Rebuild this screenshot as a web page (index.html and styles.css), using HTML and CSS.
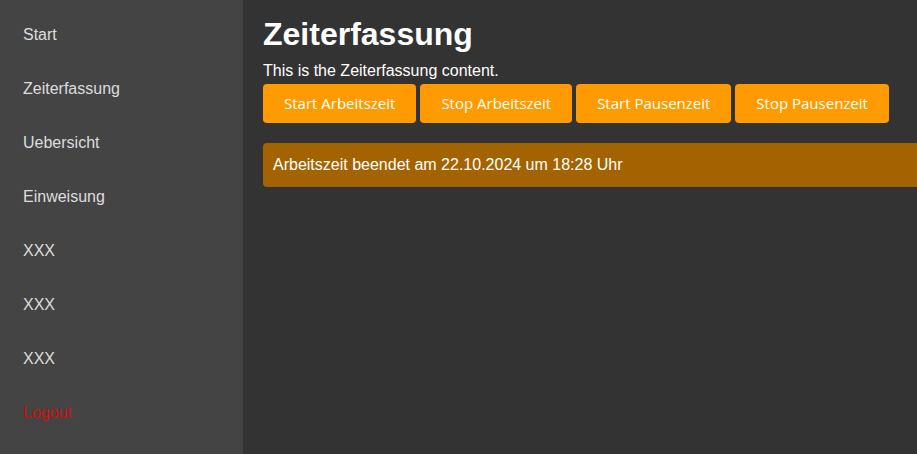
FILE: index.html
```html
<!DOCTYPE html>
<html lang="de">
<head>
<meta charset="utf-8">
<title>Zeiterfassung</title>
<link rel="stylesheet" href="styles.css">
</head>
<body>
<div class="layout">
  <nav class="sidebar">
    <a class="nav-item" href="#">Start</a>
    <a class="nav-item" href="#">Zeiterfassung</a>
    <a class="nav-item" href="#">Uebersicht</a>
    <a class="nav-item" href="#">Einweisung</a>
    <a class="nav-item" href="#">XXX</a>
    <a class="nav-item" href="#">XXX</a>
    <a class="nav-item" href="#">XXX</a>
    <a class="nav-item nav-logout" href="#">Logout</a>
  </nav>
  <main class="content">
    <h1 class="title">Zeiterfassung</h1>
    <p class="intro">This is the Zeiterfassung content.</p>
    <div class="actions">
      <button class="btn">Start Arbeitszeit</button>
      <button class="btn">Stop Arbeitszeit</button>
      <button class="btn">Start Pausenzeit</button>
      <button class="btn">Stop Pausenzeit</button>
    </div>
    <div class="message">Arbeitszeit beendet am 22.10.2024 um 18:28 Uhr</div>
  </main>
</div>
</body>
</html>
```
FILE: styles.css
```css
html, body {
  margin: 0;
  padding: 0;
  height: 100%;
  overflow: hidden;
}
body {
  font-family: "Liberation Sans", Arial, sans-serif;
  background: #333333;
  color: #ffffff;
}
.layout {
  display: flex;
  height: 100%;
}
.sidebar {
  width: 243px;
  flex: 0 0 243px;
  background: #444444;
  display: flex;
  flex-direction: column;
  padding-top: 8px;
  box-sizing: border-box;
}
.nav-item {
  display: block;
  padding: 18px 23px;
  font-size: 16px;
  line-height: 18px;
  color: #dddddd;
  text-decoration: none;
}
.nav-logout {
  color: #cc1111;
}
.content {
  flex: 1;
  min-width: 0;
  padding: 16px 0 0 20px;
}
.title {
  margin: 0;
  font-size: 32px;
  line-height: 37px;
  font-weight: bold;
}
.intro {
  margin: 9px 0 0;
  font-size: 16px;
  line-height: 18px;
}
.actions {
  display: flex;
  gap: 4px;
  margin-top: 4px;
}
.btn {
  font-family: "Open Sans", "Noto Sans", sans-serif;
  font-size: 15px;
  line-height: 19px;
  color: #ffffff;
  background: #ff9b00;
  border: none;
  border-radius: 4px;
  padding: 10px 21px;
  cursor: pointer;
}
.message {
  margin-top: 20px;
  box-sizing: border-box;
  width: 100%;
  padding: 13px 10px;
  font-size: 16px;
  line-height: 18px;
  background: #a36300;
  border-radius: 4px 0 0 4px;
  color: #ffffff;
}
```
